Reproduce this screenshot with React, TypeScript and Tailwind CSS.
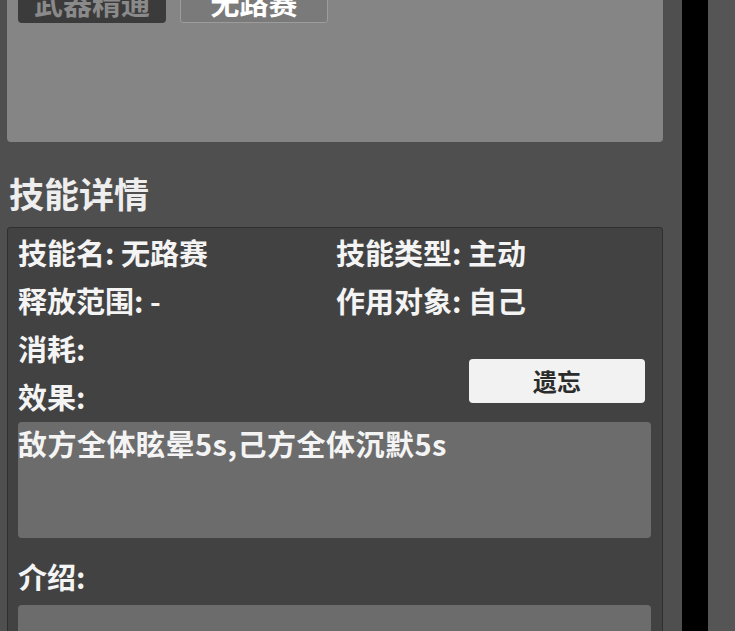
import React from 'react';

const cjk = { fontFamily: '"Noto Sans CJK SC", "Noto Sans", sans-serif' };

export default function App() {
  return (
    <div
      className="w-[735px] h-[631px] overflow-hidden bg-[#4f4f4f] flex text-[#f4f4f4]"
      style={cjk}
    >
      {/* 主列 */}
      <div className="w-[682px] shrink-0 flex flex-col pl-[7px] pr-[19px]">
        {/* 上方技能列表面板 */}
        <div className="h-[142px] shrink-0 bg-[#858585] rounded-b-[4px] flex gap-[14px] pl-[11px]">
          <button className="w-[148px] h-[41px] -mt-[18px] bg-[#3b3b3b] rounded-[4px] text-[29px] font-bold leading-[41px] text-[#8a8a8a]">
            武器精通
          </button>
          <button className="w-[148px] h-[41px] -mt-[18px] bg-[#7a7a7a] border border-[#9c9c9c] rounded-[3px] text-[29px] font-bold leading-[39px] text-white">
            无路赛
          </button>
        </div>

        {/* 标题 */}
        <div className="h-[85px] shrink-0 pl-[2px] pt-[27px] text-[35px] font-bold leading-[48px] text-[#eeeeee]">
          技能详情
        </div>

        {/* 技能详情面板 */}
        <div className="flex-1 bg-[#424242] border border-[#2f2f2f] rounded-t-[3px] flex flex-col">
          <div className="pl-[10px] text-[29px] font-bold leading-[48px]">
            <div className="grid grid-cols-[318px_1fr]">
              <div>技能名: 无路赛</div>
              <div>技能类型: 主动</div>
              <div>释放范围: -</div>
              <div>作用对象: 自己</div>
            </div>
            <div className="flex justify-between pr-[17px]">
              <div>
                <div>消耗:</div>
                <div>效果:</div>
              </div>
              <button className="w-[176px] h-[44px] mt-[35px] bg-[#f2f2f2] rounded-[4px] text-[24px] font-bold leading-[44px] text-[#2b2b2b]">
                遗忘
              </button>
            </div>
          </div>

          <div className="mt-[2px] ml-[10px] mr-[11px] h-[116px] shrink-0 bg-[#6c6c6c] rounded-[4px] text-[29px] font-bold leading-[42px] tracking-[0.5px]">
            敌方全体眩晕5s,己方全体沉默5s
          </div>

          <div className="mt-[14px] pl-[10px] text-[29px] font-bold leading-[48px]">介绍:</div>

          <div className="mt-[5px] ml-[10px] mr-[11px] h-[100px] shrink-0 bg-[#6c6c6c] rounded-[4px]" />
        </div>
      </div>

      {/* 右侧滚动条 */}
      <div className="w-[26px] shrink-0 bg-black" />
      <div className="flex-1 bg-[#555555]" />
    </div>
  );
}
